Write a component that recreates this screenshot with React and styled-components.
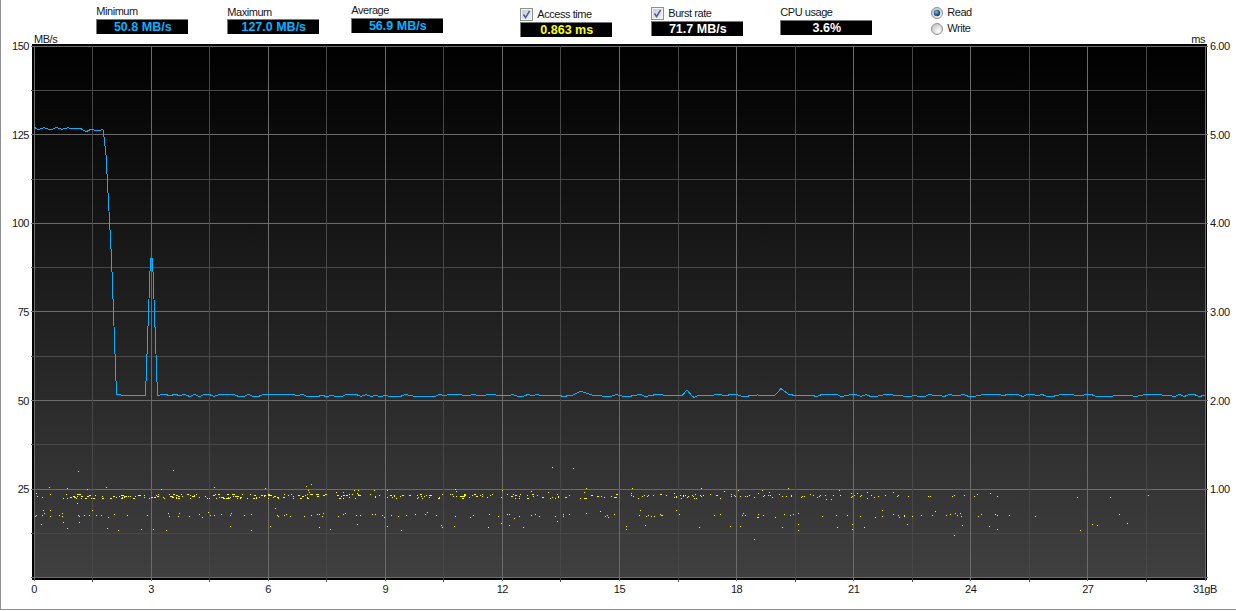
import React from 'react';
import styled, { createGlobalStyle } from 'styled-components';

const GlobalStyle = createGlobalStyle`
  html, body {
    margin: 0;
    padding: 0;
    background: #fff;
  }
`;

const Page = styled.div`
  width: 1236px;
  height: 610px;
  box-sizing: border-box;
  overflow: hidden;
  background: #fff;
  border-left: 1px solid #8f9099;
  border-bottom: 1px solid #8f9099;
  font-family: "Liberation Sans", Arial, sans-serif;
  font-size: 11px;
  letter-spacing: -0.45px;
  color: #15171c;
`;

const Header = styled.div`
  display: flex;
  align-items: flex-start;
  height: 44px;
  padding-left: 33px;
  padding-right: 31px;
  box-sizing: border-box;
`;

const Unit = styled.div`
  align-self: flex-end;
  line-height: 13px;
  margin-bottom: -2px;
  margin-left: ${p => p.$auto ? 'auto' : '0'};
`;

const Stat = styled.div`
  width: 92px;
  flex: none;
  margin-left: ${p => p.$left}px;
  margin-top: ${p => p.$top}px;
`;

const StatLabel = styled.div`
  display: flex;
  align-items: center;
  gap: 4px;
  height: ${p => p.$h}px;
  line-height: 13px;
  white-space: nowrap;
`;

const ValueBox = styled.div`
  height: 15px;
  box-sizing: border-box;
  background: #000;
  border-top: 1px solid #77797d;
  border-left: 1px solid #77797d;
  color: ${p => p.$color};
  font-size: 12.5px;
  font-weight: 700;
  letter-spacing: 0;
  line-height: 14px;
  text-align: center;
  white-space: nowrap;
`;

const RadioGroup = styled.div`
  display: flex;
  flex-direction: column;
  gap: 3px;
  margin-left: 59px;
  margin-top: 6px;
`;

const RadioRow = styled.div`
  display: flex;
  align-items: center;
  gap: 4px;
  height: 13px;
  line-height: 13px;
`;

const ChartRow = styled.div`
  display: flex;
`;

const YAxis = styled.div`
  display: flex;
  flex-direction: column;
  justify-content: space-between;
  flex: none;
  box-sizing: border-box;
  width: ${p => p.$width}px;
  height: 532px;
  margin-top: 2px;
  padding-left: ${p => p.$right ? 3 : 0}px;
  padding-right: ${p => p.$right ? 0 : 3}px;
  align-items: ${p => p.$right ? 'flex-start' : 'flex-end'};
`;

const YTick = styled.div`
  display: flex;
  align-items: center;
  height: 0;
  white-space: nowrap;
`;

const Frame = styled.div`
  flex: none;
  width: 1172px;
  height: 532px;
  border: solid #000;
  border-width: 2px 1px 2px 2px;
  background: linear-gradient(180deg, #000 0%, #404040 100%);
`;

const Plot = styled.svg`
  display: block;
  overflow: visible;
  shape-rendering: crispEdges;
`;

const XAxis = styled.div`
  display: flex;
  justify-content: space-between;
  width: 1171px;
  margin-left: 33px;
  margin-top: 3px;
`;

const XTick = styled.div`
  display: flex;
  justify-content: center;
  width: 0;
  line-height: 13px;
  white-space: nowrap;
`;

const CheckIcon = () => (
  <svg width="13" height="13" viewBox="0 0 13 13" style={{ flex: 'none' }}>
    <defs>
      <linearGradient id="chk" x1="0" y1="0" x2="1" y2="1">
        <stop offset="0" stopColor="#c9ccd2" />
        <stop offset="1" stopColor="#f1f2f4" />
      </linearGradient>
    </defs>
    <rect x="0.5" y="0.5" width="12" height="12" fill="#f4f4f4" stroke="#8e8f8f" />
    <rect x="2" y="2" width="9" height="9" fill="url(#chk)" />
    <path d="M3.5 6.5 L5.6 9.6 L9.6 2.8" fill="none" stroke="#4a5f97" strokeWidth="1.6" />
  </svg>
);

const RadioIcon = ({ on }) => (
  <svg width="12" height="12" viewBox="0 0 12 12" style={{ flex: 'none' }}>
    <defs>
      <radialGradient id="radioOff" cx="0.65" cy="0.7" r="0.7">
        <stop offset="0" stopColor="#fdfdfd" />
        <stop offset="1" stopColor="#c8c8c8" />
      </radialGradient>
      <radialGradient id="radioOn" cx="0.4" cy="0.35" r="0.7">
        <stop offset="0" stopColor="#8fb8dc" />
        <stop offset="0.6" stopColor="#1f5e92" />
        <stop offset="1" stopColor="#123f6b" />
      </radialGradient>
    </defs>
    <circle cx="6" cy="6" r="5.5" fill="url(#radioOff)" stroke="#8e8f8f" />
    {on && <circle cx="6" cy="6" r="3.2" fill="url(#radioOn)" />}
  </svg>
);

// small seeded generator so the scatter is the same on every load
let seed = 4711;
const rnd = () => {
  seed = (seed * 16807) % 2147483647;
  return seed / 2147483647;
};

const fromCrop = (ox, list) => list.map(([x, y]) => [Math.floor(ox + x / 3), Math.floor(460 + y / 3), 1]);

const SCATTER = [
  ...fromCrop(30, [[145,34],[430,30],[58,82],[112,85],[172,88],[229,82],[394,88],[553,82],[706,85],[829,79],[844,73],[835,91],[838,97],[142,130],[735,145],[20,100],[60,103],[37,112],[22,110],
    [15,170],[18,167],[40,152],[38,165],[42,160],[60,152],[60,170],[88,166],[98,160],[98,168],[145,167],[148,170],[163,166],[178,166],[187,152],[199,166],[214,166],[235,172],[253,163],[292,166],[352,166],[415,160],[418,170],[448,160],[445,170],[478,170],[508,163],[517,172],[535,157],[541,166],[553,166],[574,163],[604,160],[601,166],[643,166],[663,163],[742,166],[745,170],[763,166],[769,163],[781,170],[823,170],[844,166],[862,163],[868,163],[878,170],[880,160],
    [34,193],[100,187],[148,187],[112,205],[232,205],[265,211],[334,208],[370,208],[409,211],[601,199],[664,211],[721,199],[868,202]]),
  ...fromCrop(330, [[667,22],[730,25],[73,91],[85,91],[133,91],[172,91],[19,97],[40,97],[82,100],[376,88],[379,94],[517,91],[604,94],[769,85],[763,97],[655,97],
    [25,169],[40,163],[46,160],[79,166],[91,166],[127,163],[136,163],[157,166],[163,172],[184,166],[205,169],[229,166],[256,163],[286,163],[292,157],[319,166],[376,169],[421,172],[430,166],[478,163],[505,169],[532,163],[538,163],[553,175],[568,169],[604,166],[616,163],[628,169],[676,169],[700,163],[700,169],[718,163],[769,160],[811,154],[826,169],[832,166],[835,172],[853,163],
    [82,193],[172,199],[214,211],[334,196],[337,202],[373,199],[475,202],[514,190],[538,196],[580,202],[682,184],[889,199],[889,208],[1,207]]),
  ...fromCrop(630, [[4,100],[4,106],[10,109],[25,115],[37,109],[43,106],[52,109],[55,106],[70,106],[91,103],[94,103],[109,106],[133,100],[133,112],[139,109],[139,112],[151,106],[154,115],[160,106],[160,109],[166,106],[172,112],[175,109],[187,106],[190,109],[193,115],[196,103],[199,115],[211,106],[214,109],[220,106],[241,103],[259,106],[262,106],[271,115],[283,94],[304,103],[304,109],[313,106],[316,109],[325,91],[331,109],[346,109],[352,109],[358,106],[373,112],[385,100],[397,91],[400,109],[403,106],[415,106],[418,97],[421,106],[427,112],[448,103],[457,109],[469,109],[484,106],[484,109],[514,112],[517,109],[523,109],[541,103],[550,106],[562,112],[568,109],[571,106],[586,106],[589,118],[604,118],[610,106],[628,91],[631,106],[664,100],[664,112],[667,109],[673,106],[682,100],[691,109],[694,106],[712,97],[712,115],[724,106],[733,112],[745,109],[766,106],[790,97],[802,109],[805,106],[835,109],[895,109],[7,85],[214,85],[475,85],
    [31,151],[28,166],[49,169],[55,166],[64,169],[73,169],[91,163],[94,166],[97,166],[139,151],[148,163],[253,166],[271,163],[337,166],[340,160],[346,166],[382,172],[385,172],[385,163],[400,166],[436,172],[463,163],[481,166],[490,163],[505,160],[577,169],[619,166],[652,166],[691,169],[736,172],[757,151],[757,169],[790,163],[805,166],[808,172],[823,166],[823,169],[847,169],[874,166],
    [46,196],[208,202],[301,199],[331,199],[373,238],[457,202],[505,193],[505,211],[622,202],[667,193],[667,208],[703,202],[832,193]]),
  ...fromCrop(910, [[55,109],[61,109],[127,109],[133,106],[163,106],[193,109],[202,103],[241,100],[262,109],[502,112],[601,112],[715,106],[7,169],[34,166],[67,166],[76,154],[109,166],[121,163],[136,160],[142,166],[151,160],[154,169],[205,169],[214,163],[256,163],[262,166],[298,166],[376,169],[628,163],[157,196],[238,199],[262,208],[133,226],[511,211],[547,193],[562,196],[652,190]]),
];

// the dense band around y=496 between 62 and 625, some dots run two pixels wide
const bandDot = (from, span) => [
  Math.floor(from + rnd() * span),
  494 + Math.floor(rnd() * 5),
  rnd() < 0.25 ? 2 : 1,
];
for (let i = 0; i < 150; i++) SCATTER.push(bandDot(62, 264));
for (let i = 0; i < 105; i++) SCATTER.push(bandDot(330, 295));

const SPEED_TOP = [
  [34,127],[37,129],[40,129],[44,127.7],[47,128.7],[51,130],[56,127.4],[62,129.3],[68,127.7],[73,129],[81,128.7],[86,131.7],[91,129.3],[97,130.7],[103,129.7],[104,137],[106,155],
  [111.5,258],[116.5,394],[118,394.5],[121,395],[125,395.5],[130,395],[137,395],[141,395.5],[145.5,395.5],
  [150.5,258],[152.5,258],[157.5,395.5],[160,395],[165,394.5],[170,395.5],
];

const SPEED_MID = [
  [540,395.7],[560,395.7],[565,396.7],[567,395.7],[572,395.7],[577,393],[581,391],[585,392.7],[592,395],[602,396],[612,396],[616,394.5],[620,395.7],[626,396.5],[635,395.7],[638,394.5],[642,395],[645,396.5],[650,395.7],[655,394.7],[682,395.7],[687,390],[692,396],[694,397.5],[697,396],[712,395.7],[717,394],[722,395],[725,395.7],[730,394.7],[737,394.7],[741,396],[745,396.7],[750,395.7],[755,395.7],[757,395],[775,395.3],[781,388.5],[788,394],[797,396],[807,395],
];

const wobble = (from, to) => {
  const out = [];
  for (let x = from; x < to; x += 4.9) out.push([x, 394.5 + Math.floor(rnd() * 3)]);
  return out;
};

const TRACE = [...SPEED_TOP, ...wobble(175, 538), ...SPEED_MID, ...wobble(812, 1205), [1205, 395.5]]
  .map(([x, y]) => `${x},${y}`).join(' ');

const GRID_X = Array.from({ length: 21 }, (_, i) => ({ x: Math.floor(34 + 58.55 * i), major: i % 2 === 0 }));
const GRID_Y = Array.from({ length: 13 }, (_, i) => ({ y: Math.floor(46.2 + 44.3 * i), major: i % 2 === 0 }));

const LEFT_TICKS = ['150', '125', '100', '75', '50', '25', ''];
const RIGHT_TICKS = ['6.00', '5.00', '4.00', '3.00', '2.00', '1.00', ''];
const BOTTOM_TICKS = ['0', '3', '6', '9', '12', '15', '18', '21', '24', '27', '31gB'];

const BLUE = '#00b4ff';

const App = () => (
  <>
    <GlobalStyle />
    <Page>
      <Header>
        <Unit>MB/s</Unit>
        <Stat $left={39} $top={4}>
          <StatLabel $h={15}>Minimum</StatLabel>
          <ValueBox $color={BLUE}>50.8 MB/s</ValueBox>
        </Stat>
        <Stat $left={39} $top={5}>
          <StatLabel $h={14}>Maximum</StatLabel>
          <ValueBox $color={BLUE}>127.0 MB/s</ValueBox>
        </Stat>
        <Stat $left={32} $top={3}>
          <StatLabel $h={15}>Average</StatLabel>
          <ValueBox $color={BLUE}>56.9 MB/s</ValueBox>
        </Stat>
        <Stat $left={77} $top={6}>
          <StatLabel $h={16}><CheckIcon />Access time</StatLabel>
          <ValueBox $color="#ffff00">0.863 ms</ValueBox>
        </Stat>
        <Stat $left={39} $top={5}>
          <StatLabel $h={16}><CheckIcon />Burst rate</StatLabel>
          <ValueBox $color="#fff">71.7 MB/s</ValueBox>
        </Stat>
        <Stat $left={37} $top={5}>
          <StatLabel $h={15}>CPU usage</StatLabel>
          <ValueBox $color="#fff">3.6%</ValueBox>
        </Stat>
        <RadioGroup>
          <RadioRow><RadioIcon on />Read</RadioRow>
          <RadioRow><RadioIcon />Write</RadioRow>
        </RadioGroup>
        <Unit $auto>ms</Unit>
      </Header>
      <ChartRow>
        <YAxis $width={31}>
          {LEFT_TICKS.map((t, i) => <YTick key={i}>{t}</YTick>)}
        </YAxis>
        <Frame>
          <Plot width="1172" height="532" viewBox="34 46 1172 532">
            {GRID_Y.map(g => (
              <rect key={g.y} x="31" y={g.y} width={g.major ? 1177 : 1175} height="1" fill={g.major ? '#6b6b6b' : '#484848'} />
            ))}
            {GRID_X.map(g => (
              <rect key={g.x} x={g.x} y="46" width="1" height={g.major ? 535 : 536} fill={g.major ? '#6b6b6b' : '#484848'} />
            ))}
            <polyline points={TRACE} fill="none" stroke="#00b4ff" strokeWidth="1" />
            {SCATTER.map(([x, y, w], i) => (
              <rect key={i} x={x} y={y} width={w} height="1" fill="#ffff00" />
            ))}
          </Plot>
        </Frame>
        <YAxis $width={32} $right>
          {RIGHT_TICKS.map((t, i) => <YTick key={i}>{t}</YTick>)}
        </YAxis>
      </ChartRow>
      <XAxis>
        {BOTTOM_TICKS.map(t => <XTick key={t}>{t}</XTick>)}
      </XAxis>
    </Page>
  </>
);

export default App;
